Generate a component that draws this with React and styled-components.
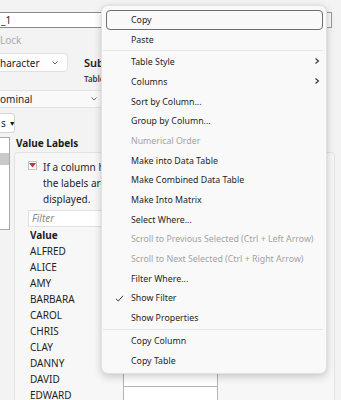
import styled, { createGlobalStyle } from "styled-components";

const GlobalStyle = createGlobalStyle`
  body {
    margin: 0;
    background: #f3f3f3;
  }
`;

const menuItems = [
  { label: "Copy", active: true },
  { label: "Paste" },
  { sep: true },
  { label: "Table Style", sub: true },
  { label: "Columns", sub: true },
  { label: "Sort by Column..." },
  { label: "Group by Column..." },
  { label: "Numerical Order", disabled: true },
  { label: "Make into Data Table" },
  { label: "Make Combined Data Table" },
  { label: "Make Into Matrix" },
  { label: "Select Where..." },
  { label: "Scroll to Previous Selected (Ctrl + Left Arrow)", disabled: true },
  { label: "Scroll to Next Selected (Ctrl + Right Arrow)", disabled: true },
  { label: "Filter Where..." },
  { label: "Show Filter", checked: true },
  { label: "Show Properties" },
  { sep: true },
  { label: "Copy Column" },
  { label: "Copy Table" },
];

const names = [
  "ALFRED",
  "ALICE",
  "AMY",
  "BARBARA",
  "CAROL",
  "CHRIS",
  "CLAY",
  "DANNY",
  "DAVID",
  "EDWARD",
];

const Chevron = () => (
  <svg width="8" height="8" viewBox="0 0 8 8" fill="none">
    <path d="M2.5 1.5 L5.5 4 L2.5 6.5" stroke="#333" strokeWidth="1.1" />
  </svg>
);

const Check = () => (
  <svg width="9" height="9" viewBox="0 0 9 9" fill="none">
    <path d="M1 4.8 L3.3 7 L8 1.8" stroke="#333" strokeWidth="1" />
  </svg>
);

const DownChevron = () => (
  <svg width="8" height="6" viewBox="0 0 8 6" fill="none">
    <path d="M1.5 1.5 L4 4 L6.5 1.5" stroke="#555" strokeWidth="0.9" />
  </svg>
);

const App = () => {
  return (
    <Page>
      <GlobalStyle />
      <Backdrop>
        <TopRow>
          <NameInput>_1</NameInput>
          <TinyButton />
        </TopRow>
        <LockLabel>Lock</LockLabel>
        <TypeRow>
          <Select $width={80}>
            haracter
            <DownChevron />
          </Select>
          <TypeInfo>
            <InfoTitle>Subt</InfoTitle>
            <InfoSub>Table</InfoSub>
          </TypeInfo>
        </TypeRow>
        <WideSelect>
          ominal
          <DownChevron />
        </WideSelect>
        <SmallDrop>
          s<Triangle>▼</Triangle>
        </SmallDrop>
        <LowerRow>
          <ListBox>
            <ListSelected />
          </ListBox>
          <LabelsColumn>
            <SectionTitle>Value Labels</SectionTitle>
            <Panel>
              <HintRow>
                <RedToggle>
                  <svg width="7" height="5" viewBox="0 0 7 5">
                    <path d="M0 0 H7 L3.5 4.5 Z" fill="#d62a33" />
                  </svg>
                </RedToggle>
                <HintText>
                  If a column has value labels defined,
                  <br />
                  the labels are shown instead of values when
                  <br />
                  displayed.
                </HintText>
              </HintRow>
              <FilterBox>Filter</FilterBox>
              <Grid>
                <HeadCell>Value</HeadCell>
                <HeadCell />
                {names.map((n) => (
                  <Row key={n}>
                    <NameCell>{n}</NameCell>
                    <LabelCell />
                  </Row>
                ))}
              </Grid>
            </Panel>
          </LabelsColumn>
        </LowerRow>
      </Backdrop>

      <Menu>
        {menuItems.map((item, i) =>
          item.sep ? (
            <Separator key={i} />
          ) : (
            <Item key={i} $active={item.active} $disabled={item.disabled}>
              {item.checked && (
                <CheckSlot>
                  <Check />
                </CheckSlot>
              )}
              {item.label}
              {item.sub && (
                <SubSlot>
                  <Chevron />
                </SubSlot>
              )}
            </Item>
          )
        )}
      </Menu>
    </Page>
  );
};

const Page = styled.div`
  position: relative;
  width: 341px;
  height: 400px;
  overflow: hidden;
  background: #f3f3f3;
  font-family: "Noto Sans", "Open Sans", sans-serif;
  color: #1e1e1e;
`;

const Backdrop = styled.div`
  display: flex;
  flex-direction: column;
  align-items: flex-start;
  padding-top: 12px;
`;

const TopRow = styled.div`
  display: flex;
  gap: 2px;
  width: 345px;
  margin-left: -10px;
`;

const NameInput = styled.div`
  width: 333px;
  height: 16px;
  box-sizing: border-box;
  padding-left: 10px;
  background: #fff;
  border: 1px solid #8a8a8a;
  border-radius: 2px;
  font-size: 10px;
  line-height: 14px;
`;

const TinyButton = styled.div`
  width: 7px;
  height: 16px;
  box-sizing: border-box;
  border: 1px solid #9a9a9a;
  background: #f7f7f7;
`;

const LockLabel = styled.div`
  margin-top: 6px;
  font-size: 10px;
  line-height: 12px;
  color: #ababab;
`;

const TypeRow = styled.div`
  display: flex;
  align-items: flex-start;
  gap: 16px;
  margin-top: 7px;
  margin-left: -12px;
`;

const Select = styled.div`
  display: flex;
  align-items: center;
  justify-content: space-between;
  width: ${(p) => p.$width}px;
  height: 19px;
  box-sizing: border-box;
  padding: 0 8px 0 11px;
  background: #fdfdfd;
  border: 1px solid #e1e1e1;
  border-radius: 4px;
  font-size: 10px;
`;

const TypeInfo = styled.div`
  display: flex;
  flex-direction: column;
  padding-top: 3px;
`;

const InfoTitle = styled.div`
  font-size: 11px;
  line-height: 14px;
  font-weight: 600;
  color: #222;
`;

const InfoSub = styled.div`
  margin-top: 4px;
  font-size: 8px;
  line-height: 10px;
  font-weight: 600;
  color: #3a3a3a;
`;

const WideSelect = styled.div`
  display: flex;
  align-items: center;
  justify-content: space-between;
  width: 117px;
  height: 18px;
  box-sizing: border-box;
  margin: 6px 0 0 -12px;
  padding: 0 6px 0 11px;
  background: #f9f9f9;
  border: 1px solid #e2e2e2;
  border-radius: 3px;
  font-size: 10px;
`;

const SmallDrop = styled.div`
  display: flex;
  align-items: center;
  gap: 3px;
  width: 26px;
  height: 20px;
  box-sizing: border-box;
  margin: 5px 0 0 -11px;
  padding-left: 11px;
  background: #fff;
  border: 1px solid #d3d3d3;
  border-radius: 3px;
  font-size: 10px;
`;

const Triangle = styled.span`
  font-size: 7px;
  color: #111;
`;

const LowerRow = styled.div`
  display: flex;
  gap: 4px;
  margin: 4px 0 0 -20px;
`;

const ListBox = styled.div`
  width: 30px;
  height: 93px;
  box-sizing: border-box;
  padding-top: 15px;
  background: #fff;
  border: 1px solid #a9a9a9;
`;

const ListSelected = styled.div`
  height: 12px;
  background: #c9c9c9;
`;

const LabelsColumn = styled.div`
  display: flex;
  flex-direction: column;
  width: 321px;
`;

const SectionTitle = styled.div`
  padding-left: 2px;
  font-size: 10px;
  line-height: 12px;
  font-weight: 700;
  color: #1c1c1c;
`;

const Panel = styled.div`
  margin-top: 3px;
  height: 260px;
  box-sizing: border-box;
  padding: 7px 0 0 13px;
  background: #f7f7f7;
  border: 1px solid #e3e3e3;
  border-radius: 4px;
  overflow: hidden;
`;

const HintRow = styled.div`
  display: flex;
  gap: 6px;
`;

const RedToggle = styled.div`
  display: flex;
  align-items: center;
  justify-content: center;
  width: 9px;
  height: 9px;
  margin-top: 1px;
  box-sizing: border-box;
  background: #fff;
  border: 1px solid #c4c4c4;
`;

const HintText = styled.div`
  font-size: 10px;
  line-height: 16px;
  margin-top: -1px;
  white-space: nowrap;
`;

const FilterBox = styled.div`
  width: 92px;
  height: 17px;
  box-sizing: border-box;
  margin-top: 3px;
  padding-left: 3px;
  background: #fff;
  border: 1px solid #e0e0e0;
  font-size: 10px;
  line-height: 15px;
  font-style: italic;
  color: #8a8a8a;
`;

const Grid = styled.div`
  display: grid;
  grid-template-columns: 95px 95px;
`;

const HeadCell = styled.div`
  padding-left: 2px;
  font-size: 10px;
  line-height: 16px;
  font-weight: 700;
`;

const Row = styled.div`
  display: contents;
`;

const NameCell = styled.div`
  padding-left: 2px;
  font-size: 10px;
  line-height: 16px;
  height: 16px;
  color: #1e1e1e;
`;

const LabelCell = styled.div`
  height: 16px;
  box-sizing: border-box;
  background: #fff;
  border: 1px solid #b4b4b4;
  border-top: none;
`;

const Menu = styled.div`
  position: absolute;
  left: 101px;
  top: 5px;
  width: 226px;
  box-sizing: border-box;
  padding: 4px 0 3px;
  background: #f9f9f9;
  border: 1px solid #e2e2e2;
  border-radius: 7px;
  box-shadow: 0 3px 9px rgba(0, 0, 0, 0.18), 0 0 2px rgba(0, 0, 0, 0.08);
  font-family: "Noto Sans", "Open Sans", sans-serif;
  font-size: 8.8px;
`;

const Item = styled.div`
  position: relative;
  display: flex;
  align-items: center;
  height: 19.7px;
  box-sizing: border-box;
  margin: 0 3px 0 4px;
  padding-left: 24px;
  border: 1.5px solid ${(p) => (p.$active ? "#6e6e6e" : "transparent")};
  border-radius: 4px;
  color: ${(p) => (p.$disabled ? "#a3a3a3" : "#1e1e1e")};
  white-space: nowrap;
`;

const CheckSlot = styled.span`
  position: absolute;
  left: 8px;
  top: 4px;
  display: flex;
`;

const SubSlot = styled.span`
  position: absolute;
  right: 1px;
  top: 4px;
  display: flex;
`;

const Separator = styled.div`
  height: 1px;
  margin: 1px 3px 1px 1px;
  background: #e6e6e6;
`;

export default App;
